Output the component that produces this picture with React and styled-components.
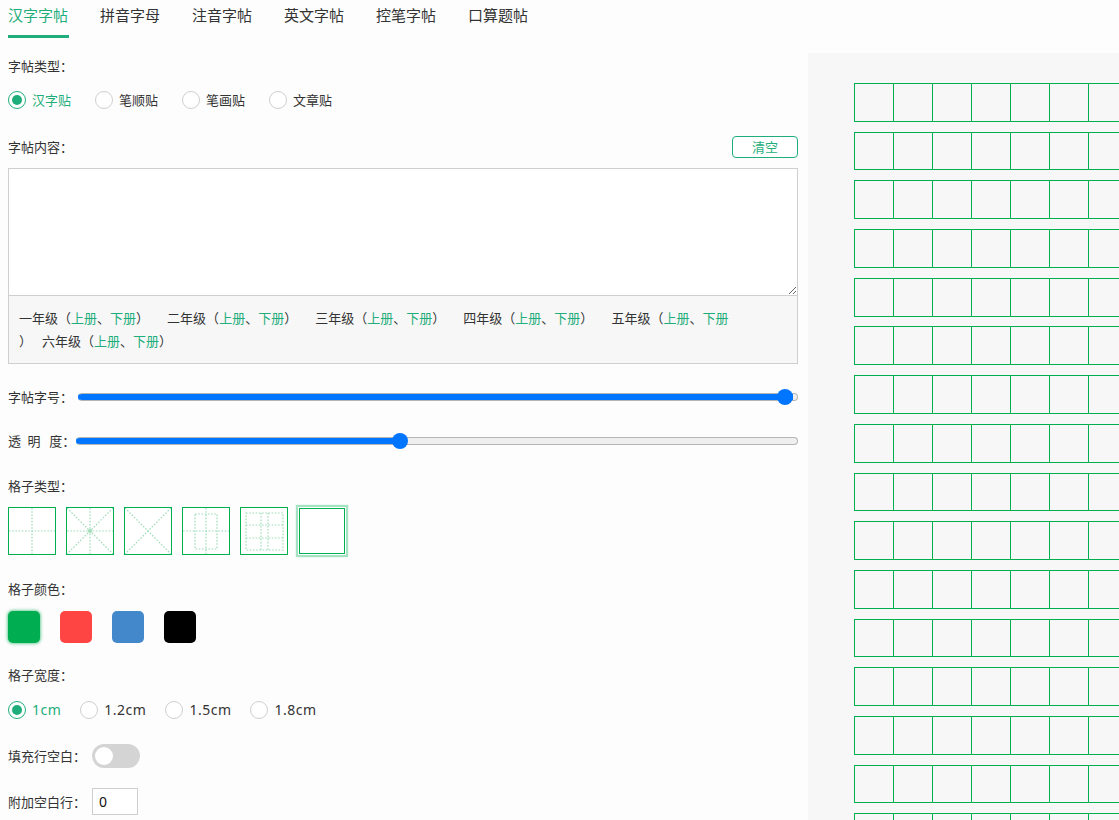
import React, { useState } from "react";
import styled, { createGlobalStyle, css } from "styled-components";

//------------------------------------------------------------------------

const GREEN = "#1fae7b";
const GRID_GREEN = "#00b050";
const DOT_GREEN = "#9fdcb8";

const GlobalStyle = createGlobalStyle`
    html, body {
        margin: 0;
        padding: 0;
        background: #fdfdfd;
        overflow: hidden;
    }
    body {
        font-family: "Noto Sans", "Noto Sans CJK SC", "Liberation Sans", sans-serif;
        color: #333;
        font-size: 13px;
    }
`;

//------------------------------------------------------------------------

const Page = styled.div`
    width: 1119px;
    height: 820px;
    padding-left: 8px;
    box-sizing: border-box;
    overflow: hidden;
`;

const TabBar = styled.div`
    display: flex;
    gap: 31px;
    height: 38px;
`;

const Tab = styled.div`
    font-size: 15px;
    line-height: 20px;
    padding: 5px 1px 10px 0;
    border-bottom: 3px solid ${(p) => (p.$active ? GREEN : "transparent")};
    color: ${(p) => (p.$active ? GREEN : "#333")};
    cursor: pointer;
`;

const Main = styled.div`
    display: flex;
    margin-top: 15px;
    gap: 10px;
`;

const LeftColumn = styled.div`
    width: 790px;
    flex-shrink: 0;
    padding-top: 4px;
`;

const Field = styled.div`
    display: flex;
    align-items: center;
    margin-top: ${(p) => p.$mt || 0}px;
    ${(p) =>
        p.$between &&
        css`
            justify-content: space-between;
        `}
    gap: ${(p) => p.$gap || 0}px;
`;

const Label = styled.div`
    font-size: 13px;
    line-height: 18px;
    white-space: pre;
    color: #333;
`;

//------------------------------------------------------------------------

const RadioItem = styled.label`
    display: flex;
    align-items: center;
    gap: 6px;
    font-size: ${(p) => p.$size || 13}px;
    letter-spacing: ${(p) => (p.$size ? 0.5 : 0)}px;
    line-height: 18px;
    color: ${(p) => (p.$checked ? GREEN : "#333")};
    cursor: pointer;
`;

const RadioCircle = styled.span`
    width: 18px;
    height: 18px;
    box-sizing: border-box;
    border-radius: 50%;
    border: 1px solid ${(p) => (p.$checked ? GREEN : "#cfcfcf")};
    background: #fff;
    display: flex;
    align-items: center;
    justify-content: center;

    &::after {
        content: "";
        width: 10px;
        height: 10px;
        border-radius: 50%;
        background: ${(p) => (p.$checked ? GREEN : "transparent")};
    }
`;

function RadioGroup({ options, value, onChange, gap, size }) {
    return (
        <Field $mt={0} $gap={gap}>
            {options.map((o) => (
                <RadioItem
                    key={o}
                    $checked={o === value}
                    $size={size}
                    onClick={() => onChange(o)}
                >
                    <RadioCircle $checked={o === value} />
                    {o}
                </RadioItem>
            ))}
        </Field>
    );
}

//------------------------------------------------------------------------

const ClearButton = styled.button`
    width: 66px;
    height: 22px;
    box-sizing: border-box;
    border: 1px solid ${GREEN};
    border-radius: 4px;
    background: #fff;
    color: ${GREEN};
    font-family: inherit;
    font-size: 13px;
    line-height: 18px;
    padding: 0;
    cursor: pointer;
`;

const TextArea = styled.textarea`
    display: block;
    width: 100%;
    height: 128px;
    box-sizing: border-box;
    border: 1px solid #cfcfcf;
    background: #fff;
    margin: 10px 0 0;
    padding: 6px 8px;
    font-family: inherit;
    font-size: 14px;
    outline: none;
`;

const GradeBox = styled.div`
    box-sizing: border-box;
    height: 68px;
    border: 1px solid #cfcfcf;
    border-top: none;
    background: #f7f7f7;
    padding: 11px 10px 0;
    font-size: 13px;
    line-height: 23px;
`;

const GradeLine = styled.div`
    display: flex;
    white-space: pre;
`;

const GradeItem = styled.span`
    margin-right: ${(p) => p.$mr ?? 18}px;
`;

const Book = styled.a`
    color: ${GREEN};
    text-decoration: none;
    cursor: pointer;
`;

//------------------------------------------------------------------------

const Range = styled.input.attrs({ type: "range" })`
    -webkit-appearance: none;
    appearance: none;
    flex: 1;
    height: 20px;
    margin: 0 0 0 ${(p) => p.$ml ?? 5}px;
    background: transparent;

    &::-webkit-slider-runnable-track {
        height: 8px;
        border-radius: 4px;
        box-sizing: border-box;
        background: linear-gradient(
            to right,
            #0075ff ${(p) => p.$pct}%,
            #efefef ${(p) => p.$pct}%
        );
        border: 1px solid #b5b5b5;
        border-left-color: #0075ff;
    }

    &::-webkit-slider-thumb {
        -webkit-appearance: none;
        width: 16px;
        height: 16px;
        border-radius: 50%;
        background: #0075ff;
        border: none;
        margin-top: -5px;
    }
`;

//------------------------------------------------------------------------

const GridTypes = styled.div`
    display: flex;
    gap: 10px;
`;

const GridType = styled.div`
    width: 48px;
    height: 48px;
    box-sizing: border-box;
    border: 1px solid ${GRID_GREEN};
    background: #fff;
    cursor: pointer;

    ${(p) =>
        p.$selected &&
        css`
            box-shadow: 0 0 0 1px #fff, 0 0 1px 3px rgba(0, 176, 80, 0.35);
            width: 46px;
            height: 46px;
            margin: 1px;
        `}

    svg {
        display: block;
    }
`;

function GridPattern({ kind }) {
    const dot = {
        stroke: DOT_GREEN,
        strokeWidth: 1.2,
        strokeDasharray: "1.6 1.6",
        fill: "none",
    };
    return (
        <svg width="46" height="46" viewBox="0 0 46 46">
            {kind === "tian" && (
                <>
                    <line x1="23" y1="0" x2="23" y2="46" {...dot} />
                    <line x1="0" y1="23" x2="46" y2="23" {...dot} />
                </>
            )}
            {kind === "mi" && (
                <>
                    <line x1="23" y1="0" x2="23" y2="46" {...dot} />
                    <line x1="0" y1="23" x2="46" y2="23" {...dot} />
                    <line x1="0" y1="0" x2="46" y2="46" {...dot} />
                    <line x1="46" y1="0" x2="0" y2="46" {...dot} />
                    <circle cx="23" cy="23" r="2" fill={DOT_GREEN} />
                </>
            )}
            {kind === "x" && (
                <>
                    <line x1="0" y1="0" x2="46" y2="46" {...dot} />
                    <line x1="46" y1="0" x2="0" y2="46" {...dot} />
                </>
            )}
            {kind === "hui" && (
                <>
                    <line x1="23" y1="0" x2="23" y2="46" {...dot} />
                    <line x1="0" y1="23" x2="46" y2="23" {...dot} />
                    <rect x="12" y="6" width="22" height="35" {...dot} />
                </>
            )}
            {kind === "jiu" && (
                <>
                    <rect x="5" y="5" width="37" height="37" {...dot} />
                    <line x1="20" y1="5" x2="20" y2="42" {...dot} />
                    <line x1="27" y1="5" x2="27" y2="42" {...dot} />
                    <line x1="5" y1="17" x2="42" y2="17" {...dot} />
                    <line x1="5" y1="30" x2="42" y2="30" {...dot} />
                </>
            )}
        </svg>
    );
}

//------------------------------------------------------------------------

const Swatches = styled.div`
    display: flex;
    gap: 20px;
`;

const Swatch = styled.div`
    width: 32px;
    height: 32px;
    border-radius: 5px;
    background: ${(p) => p.$color};
    cursor: pointer;
    ${(p) =>
        p.$selected &&
        css`
            box-shadow: 0 0 3px 1px rgba(0, 173, 80, 0.55);
        `}
`;

const Toggle = styled.div`
    width: 48px;
    height: 24px;
    border-radius: 12px;
    background: ${(p) => (p.$on ? GREEN : "#d4d4d4")};
    margin-left: 6px;
    display: flex;
    align-items: center;
    padding: 0 3px;
    box-sizing: border-box;
    cursor: pointer;

    &::after {
        content: "";
        width: 18px;
        height: 18px;
        border-radius: 50%;
        background: #fff;
        margin-left: ${(p) => (p.$on ? 24 : 0)}px;
    }
`;

const NumberBox = styled.input`
    width: 46px;
    height: 27px;
    box-sizing: border-box;
    margin-left: 6px;
    border: 1px solid #cfcfcf;
    background: #fff;
    padding: 0 6px;
    font-family: inherit;
    font-size: 14px;
    color: #111;
    outline: none;
`;

//------------------------------------------------------------------------

const Preview = styled.div`
    flex: 1;
    height: 767px;
    background: #f7f7f7;
    padding: 30px 0 0 46px;
    overflow: hidden;
`;

const GridRow = styled.div`
    display: flex;
    width: max-content;
    margin-bottom: 9.9px;
`;

const Cell = styled.div`
    width: 39px;
    height: 38.8px;
    box-sizing: border-box;
    border: 1px solid ${GRID_GREEN};
    border-left: none;

    &:first-child {
        width: 40px;
        border-left: 1px solid ${GRID_GREEN};
    }
`;

//------------------------------------------------------------------------

const TABS = ["汉字字帖", "拼音字母", "注音字帖", "英文字帖", "控笔字帖", "口算题帖"];
const GRADES = ["一", "二", "三", "四", "五"];
const COLORS = ["#00ad50", "#ff4444", "#4488cc", "#000000"];
const KINDS = ["tian", "mi", "x", "hui", "jiu", "none"];

function App() {
    const [type, setType] = useState("汉字贴");
    const [width, setWidth] = useState("1cm");
    const [size, setSize] = useState(994);
    const [alpha, setAlpha] = useState(447);
    const [kind, setKind] = useState("none");
    const [color, setColor] = useState(COLORS[0]);
    const [fill, setFill] = useState(false);

    return (
        <Page>
            <GlobalStyle />
            <TabBar>
                {TABS.map((t, i) => (
                    <Tab key={t} $active={i === 0}>
                        {t}
                    </Tab>
                ))}
            </TabBar>

            <Main>
                <LeftColumn>
                    <Label>字帖类型：</Label>
                    <Field $mt={16}>
                        <RadioGroup
                            options={["汉字贴", "笔顺贴", "笔画贴", "文章贴"]}
                            value={type}
                            onChange={setType}
                            gap={24}
                        />
                    </Field>

                    <Field $mt={27} $between>
                        <Label>字帖内容：</Label>
                        <ClearButton>清空</ClearButton>
                    </Field>
                    <TextArea />
                    <GradeBox>
                        <GradeLine>
                            {GRADES.map((g, i) => (
                                <GradeItem key={g} $mr={i === 4 ? 0 : 18}>
                                    {g}年级（<Book>上册</Book>、<Book>下册</Book>
                                    {i < 4 && "）"}
                                </GradeItem>
                            ))}
                        </GradeLine>
                        <GradeLine>
                            <GradeItem $mr={10}>）</GradeItem>
                            <GradeItem>
                                六年级（<Book>上册</Book>、<Book>下册</Book>）
                            </GradeItem>
                        </GradeLine>
                    </GradeBox>

                    <Field $mt={23}>
                        <Label>字帖字号：</Label>
                        <Range
                            min={0}
                            max={1000}
                            value={size}
                            $pct={size / 10}
                            onChange={(e) => setSize(+e.target.value)}
                        />
                    </Field>
                    <Field $mt={24}>
                        <Label>{"透\u2002明\u2002\u2009度："}</Label>
                        <Range
                            $ml={1}
                            min={0}
                            max={1000}
                            value={alpha}
                            $pct={alpha / 10}
                            onChange={(e) => setAlpha(+e.target.value)}
                        />
                    </Field>

                    <Field $mt={26}>
                        <Label>格子类型：</Label>
                    </Field>
                    <Field $mt={12}>
                        <GridTypes>
                            {KINDS.map((k) => (
                                <GridType
                                    key={k}
                                    $selected={k === kind}
                                    onClick={() => setKind(k)}
                                >
                                    {k !== "none" && <GridPattern kind={k} />}
                                </GridType>
                            ))}
                        </GridTypes>
                    </Field>

                    <Field $mt={25}>
                        <Label>格子颜色：</Label>
                    </Field>
                    <Field $mt={13}>
                        <Swatches>
                            {COLORS.map((c) => (
                                <Swatch
                                    key={c}
                                    $color={c}
                                    $selected={c === color}
                                    onClick={() => setColor(c)}
                                />
                            ))}
                        </Swatches>
                    </Field>

                    <Field $mt={23}>
                        <Label>格子宽度：</Label>
                    </Field>
                    <Field $mt={17}>
                        <RadioGroup
                            options={["1cm", "1.2cm", "1.5cm", "1.8cm"]}
                            value={width}
                            onChange={setWidth}
                            gap={19}
                            size={14}
                        />
                    </Field>

                    <Field $mt={25}>
                        <Label>填充行空白：</Label>
                        <Toggle $on={fill} onClick={() => setFill(!fill)} />
                    </Field>
                    <Field $mt={20}>
                        <Label>附加空白行：</Label>
                        <NumberBox defaultValue="0" />
                    </Field>
                </LeftColumn>

                <Preview>
                    {Array.from({ length: 16 }).map((_, r) => (
                        <GridRow key={r}>
                            {Array.from({ length: 8 }).map((_, c) => (
                                <Cell key={c} />
                            ))}
                        </GridRow>
                    ))}
                </Preview>
            </Main>
        </Page>
    );
}

export default App;
